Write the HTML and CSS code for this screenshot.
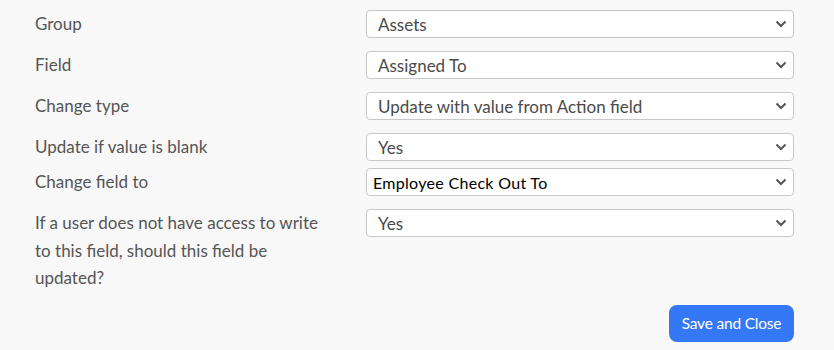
FILE: index.html
```html
<!DOCTYPE html>
<html>
<head>
<meta charset="utf-8">
<link rel="stylesheet" href="styles.css">
</head>
<body>
<div class="form">
  <div class="row">
    <div class="label">Group</div>
    <div class="select"><span class="value">Assets</span><svg class="chev" width="12" height="8" viewBox="0 0 12 8"><path d="M1.5 1.5 L6 6 L10.5 1.5" fill="none" stroke="#555" stroke-width="2"/></svg></div>
  </div>
  <div class="row">
    <div class="label">Field</div>
    <div class="select"><span class="value">Assigned To</span><svg class="chev" width="12" height="8" viewBox="0 0 12 8"><path d="M1.5 1.5 L6 6 L10.5 1.5" fill="none" stroke="#555" stroke-width="2"/></svg></div>
  </div>
  <div class="row">
    <div class="label">Change type</div>
    <div class="select"><span class="value">Update with value from Action field</span><svg class="chev" width="12" height="8" viewBox="0 0 12 8"><path d="M1.5 1.5 L6 6 L10.5 1.5" fill="none" stroke="#555" stroke-width="2"/></svg></div>
  </div>
  <div class="row">
    <div class="label">Update if value is blank</div>
    <div class="select"><span class="value">Yes</span><svg class="chev" width="12" height="8" viewBox="0 0 12 8"><path d="M1.5 1.5 L6 6 L10.5 1.5" fill="none" stroke="#555" stroke-width="2"/></svg></div>
  </div>
  <div class="row row-tight">
    <div class="label">Change field to</div>
    <div class="select select-native"><span class="value">Employee Check Out To</span><svg class="chev" width="12" height="8" viewBox="0 0 12 8"><path d="M1.5 1.5 L6 6 L10.5 1.5" fill="none" stroke="#555" stroke-width="2"/></svg></div>
  </div>
  <div class="row">
    <div class="label">If a user does not have access to write to this field, should this field be updated?</div>
    <div class="select"><span class="value">Yes</span><svg class="chev" width="12" height="8" viewBox="0 0 12 8"><path d="M1.5 1.5 L6 6 L10.5 1.5" fill="none" stroke="#555" stroke-width="2"/></svg></div>
  </div>
  <div class="actions">
    <button class="btn-primary">Save and Close</button>
  </div>
</div>
</body>
</html>
```
FILE: styles.css
```css
html, body {
  margin: 0;
  padding: 0;
  background: #f8f8f8;
}
body {
  font-family: Lato, "Open Sans", sans-serif;
  color: #4a4a4a;
  width: 834px;
  height: 350px;
  overflow: hidden;
}
.form {
  padding: 10px 0 0 35px;
  width: 759px;
  display: flex;
  flex-direction: column;
  gap: 13px;
}
.row {
  display: grid;
  grid-template-columns: 331px 428px;
  align-items: start;
}
.row-tight {
  margin-top: -6px;
}
.label {
  font-size: 17px;
  line-height: 27.5px;
  color: #555;
  width: 300px;
}
.select {
  box-sizing: border-box;
  height: 28px;
  background: #fff;
  border: 1px solid #c8c8c8;
  border-radius: 4px;
  display: flex;
  align-items: center;
  justify-content: space-between;
  padding: 0 6px 0 11px;
}
.value {
  font-size: 17px;
  color: #4a4a4a;
}
.select-native {
  padding-left: 6px;
}
.select-native .value {
  color: #000;
  font-size: 16px;
  letter-spacing: 0.3px;
}
.chev {
  display: block;
}
.actions {
  display: flex;
  justify-content: flex-end;
}
.btn-primary {
  width: 125px;
  height: 37px;
  border: none;
  border-radius: 8px;
  background: #3478f6;
  color: #fff;
  font-family: Lato, sans-serif;
  font-size: 15.5px;
  letter-spacing: -0.2px;
  padding: 0;
}
```
